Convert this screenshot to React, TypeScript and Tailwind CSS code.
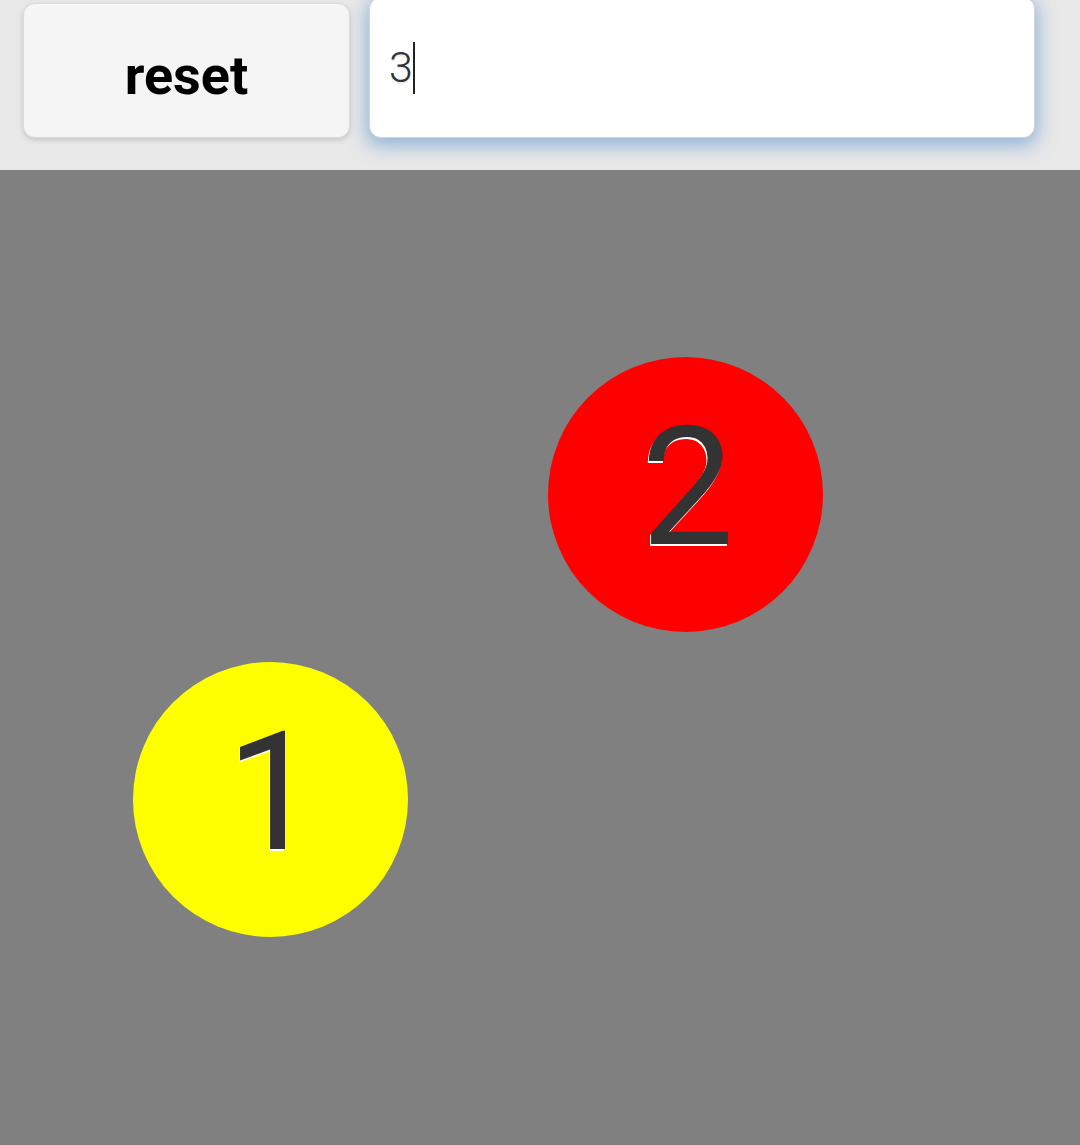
import React from "react";

export default function App() {
  return (
    <div className="w-[1080px] h-[1145px] flex flex-col overflow-hidden" style={{ fontFamily: "Roboto, 'Liberation Sans', sans-serif" }}>
      <div className="h-[170px] bg-[#e8e8e8] flex items-start gap-[19px] pl-[23px] pr-[45px] shrink-0">
        <button className="mt-[3px] w-[327px] h-[135px] rounded-[12px] bg-[#f5f5f5] border border-[#dcdcdc] shadow-[0_2px_5px_rgba(0,0,0,0.15)] flex items-center justify-center">
          <span className="text-[54px] font-bold text-black leading-none mt-[10px]" style={{ fontFamily: "Roboto, sans-serif" }}>reset</span>
        </button>
        <div className="mt-[-3px] flex-1 h-[141px] rounded-[12px] bg-white border border-[#d6d6d6] shadow-[0_5px_18px_3px_rgba(80,140,205,0.55)] flex items-center pl-[19px]">
          <span className="text-[43px] font-light text-[#333] leading-none [text-shadow:0_2px_1px_rgba(0,0,0,0.08)] mt-[0px]" style={{ fontFamily: "Roboto, sans-serif" }}>3</span>
          <span className="w-[2px] h-[52px] bg-[#222] mt-[1px]" />
        </div>
      </div>
      <div className="relative flex-1 bg-[#808080]">
        <div className="absolute left-[548px] top-[187px] w-[275px] h-[275px] rounded-full bg-[#ff0000] flex items-center justify-center">
          <span className="text-[165px] text-[#333] leading-none mt-[-14px] ml-[4px] [text-shadow:-1px_2px_0_#ffffff]">2</span>
        </div>
        <div className="absolute left-[133px] top-[492px] w-[275px] h-[275px] rounded-full bg-[#ffff00] flex items-center justify-center">
          <span className="text-[165px] text-[#333] leading-none mt-[-14px] ml-[4px] [text-shadow:-1px_2px_0_#ffffff]">1</span>
        </div>
      </div>
    </div>
  );
}
